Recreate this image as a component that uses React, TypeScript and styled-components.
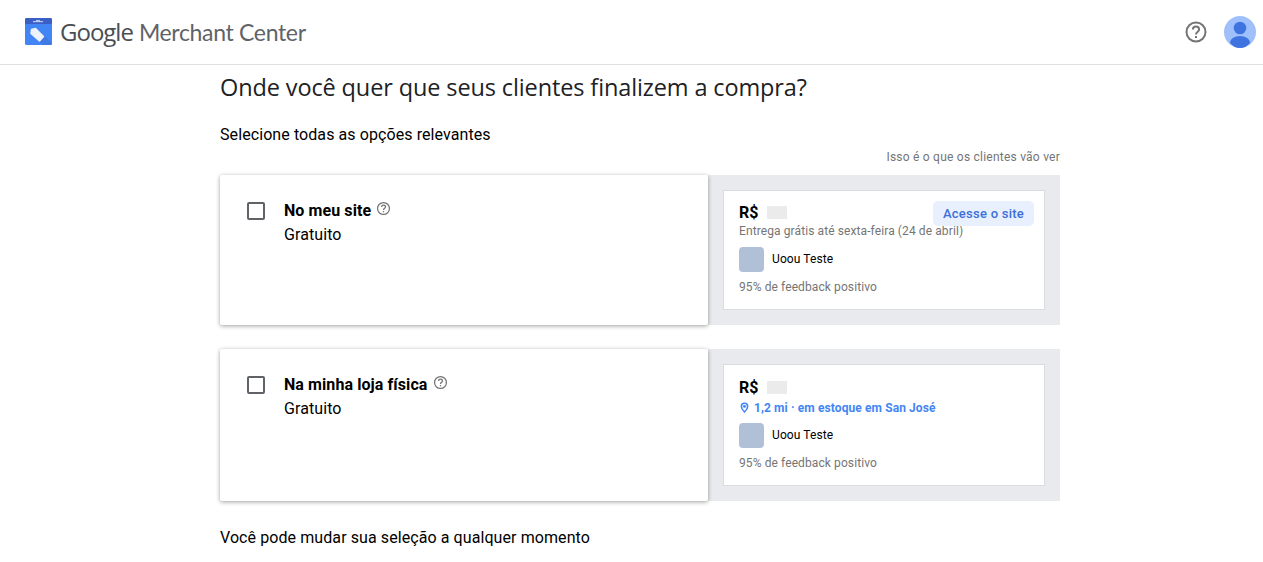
import React from "react";
import styled, { createGlobalStyle } from "styled-components";

const Global = createGlobalStyle`
  html, body { margin: 0; padding: 0; background: #fff; font-family: Roboto, "Liberation Sans", sans-serif; overflow: hidden; }
`;
const Header = styled.header`
  height: 64px; border-bottom: 1px solid #e0e0e0; display: flex; align-items: center;
  padding: 0 7px 0 24px;
`;
const Brand = styled.div`display: flex; align-items: center; flex: 1; gap: 8px;`;
const BrandText = styled.div`
  font-family: Lato, Roboto, sans-serif; font-size: 23px; color: #5f6368; letter-spacing: -0.33px; white-space: nowrap; display: flex; gap: 6px;
`;
const BrandGoogle = styled.span`font-family: "Open Sans", sans-serif; font-size: 24px; font-weight: 500; color: #4a4e52; letter-spacing: -1px; line-height: 28px;`;
const HelpBtn = styled.div`width: 24px; height: 24px; margin-right: 16px; display: flex;`;
const Avatar = styled.div`width: 32px; height: 32px; display: flex;`;
const Main = styled.main`width: 840px; margin-left: 220px;`;
const Title = styled.h1`
  margin: 6px 0 0; font-family: "Open Sans", Roboto, sans-serif; font-weight: 400; font-size: 23.5px; line-height: 32px; color: #202124; letter-spacing: -0.12px;
`;
const Subtitle = styled.div`margin-top: 22px; font-size: 16px; line-height: 20px; color: #000; letter-spacing: 0.085px;`;
const Hint = styled.div`margin-top: 4px; text-align: right; font-size: 12px; line-height: 16px; color: #757575; letter-spacing: 0.23px;`;
const Row = styled.section<{ $h: number; $mt: number }>`display: flex; height: ${p => p.$h}px; margin-top: ${p => p.$mt}px;`;
const Choice = styled.div`
  width: 488px; background: #fff; border-radius: 2px; display: flex; padding: 24px 0 0 27px; box-sizing: border-box;
  box-shadow: 0 1px 4px rgba(0,0,0,.38); position: relative; z-index: 1;
`;
const Check = styled.div`width: 14px; height: 14px; border: 2px solid #5f6368; border-radius: 2px; margin-right: 19px; margin-top: 3px;`;
const ChoiceText = styled.div`font-size: 16px; line-height: 24px; color: #000; letter-spacing: 0.085px;`;
const ChoiceTitle = styled.div`display: flex; font-weight: 700; gap: 5px; align-items: flex-start;`;
const Tip = styled.span`display: flex; margin-top: 2px;`;
const Panel = styled.div`flex: 1; background: #e8eaed; padding: 15px; display: flex;`;
const Offer = styled.div<{ $top: number }>`
  flex: 1; background: #fff; border: 1px solid #dadce0; padding: ${p => p.$top}px 10px 0 15px; position: relative; box-sizing: border-box;
`;
const PriceRow = styled.div`display: flex; align-items: center; height: 22px; gap: 9px;`;
const Price = styled.span`font-size: 16px; font-weight: 700; color: #000;`;
const Blank = styled.span`width: 20px; height: 13px; background: #ebebeb;`;
const Visit = styled.div`
  position: absolute; top: 10px; right: 10px; width: 101px; height: 25px; background: #e8f0fe; border-radius: 5px;
  color: #3c6fd8; font-size: 13px; font-weight: 500; letter-spacing: 0.25px; display: flex; align-items: center; justify-content: center;
`;
const Delivery = styled.div`font-size: 12px; line-height: 16px; color: #757575; letter-spacing: 0.1px;`;
const Stock = styled.div`font-size: 12px; line-height: 16px; color: #4285f4; font-weight: 700; letter-spacing: 0.1px; display: flex; align-items: center; gap: 5px; margin-top: 2px;`;
const Seller = styled.div<{ $mt: number }>`display: flex; align-items: center; gap: 8px; margin-top: ${p => p.$mt}px; font-size: 12px; color: #000; letter-spacing: 0.1px;`;
const SellerName = styled.span`margin-top: -2px;`;
const Square = styled.div`width: 25px; height: 25px; border-radius: 4px; background: #b0c0d6;`;
const Feedback = styled.div`font-size: 12px; line-height: 16px; color: #757575; margin-top: 7px; letter-spacing: 0.1px;`;
const Footer = styled.div`margin-top: 27px; font-size: 16px; line-height: 20px; color: #000; letter-spacing: 0.085px;`;
const PinWrap = styled.span`display: flex; margin-left: 1px; margin-top: -2px;`;

const Help = ({ size, color, w }: { size: number; color: string; w: number }) => (
  <svg width={size} height={size} viewBox="0 0 24 24" fill="none">
    <circle cx="12" cy="12" r={10 - w / 2 + 0.5} stroke={color} strokeWidth={w} />
    <path d="M8.900 9.600c0-1.800 1.400-3.100 3.100-3.100s3.100 1.300 3.100 2.900c0 2.200-3.100 2.400-3.100 5" stroke={color} strokeWidth={w} fill="none" />
    <rect x="11" y="16" width="2" height="2" fill={color} />
  </svg>
);

const Logo = () => (
  <svg width="28" height="28" viewBox="0 0 28 28">
    <rect x="1" y="0" width="27" height="27" rx="1.500" fill="#4285f4" />
    <path d="M1 1.500A1.500 1.500 0 0 1 2.500 0h24A1.500 1.500 0 0 1 28 1.500V6H1z" fill="#3b5fc4" />
    <rect x="9" y="3" width="10" height="1.200" fill="#b4c8f4" />
    <rect x="12" y="2" width="4" height="1" fill="#b4c8f4" />
    <path d="M12 10l16 15v.5a1.500 1.500 0 0 1-1.500 1.500H19L7 16z" fill="#3a6fd0" opacity=".5" />
    <path d="M7.500 11.500L11.500 10.500L19.500 18.500L15.500 23L7 15.500z" fill="#eef2fb" stroke="#eef2fb" strokeWidth="1.500" strokeLinejoin="round" />
  </svg>
);

const Person = () => (
  <svg width="32" height="32" viewBox="0 0 32 32">
    <circle cx="16" cy="16" r="16" fill="#a0c0fb" />
    <circle cx="16" cy="12" r="6.300" fill="#3f74e0" />
    <path d="M6 27c0-4 4.500-7 10-7s10 3 10 7c-2.500 3-6 5-10 5s-7.500-2-10-5z" fill="#3f74e0" />
  </svg>
);

const Pin = () => (
  <svg width="9" height="11" viewBox="0 0 20 24" fill="none" stroke="#4285f4" strokeWidth="3.500">
    <path d="M10 22s-7-7-7-12.500a7 7 0 0 1 14 0C17 15 10 22 10 22z" />
    <circle cx="10" cy="9.500" r="1.500" fill="#4285f4" />
  </svg>
);

export default function App() {
  return (
    <>
      <Global />
      <Header>
        <Brand>
          <Logo />
          <BrandText><BrandGoogle>Google</BrandGoogle><span>Merchant Center</span></BrandText>
        </Brand>
        <HelpBtn><Help size={24} color="#757575" w={2} /></HelpBtn>
        <Avatar><Person /></Avatar>
      </Header>
      <Main>
        <Title>Onde você quer que seus clientes finalizem a compra?</Title>
        <Subtitle>Selecione todas as opções relevantes</Subtitle>
        <Hint>Isso é o que os clientes vão ver</Hint>
        <Row $h={150} $mt={10}>
          <Choice>
            <Check />
            <ChoiceText>
              <ChoiceTitle>No meu site <Tip><Help size={15} color="#757575" w={2} /></Tip></ChoiceTitle>
              Gratuito
            </ChoiceText>
          </Choice>
          <Panel>
            <Offer $top={10}>
              <PriceRow><Price>R$</Price><Blank /></PriceRow>
              <Visit>Acesse o site</Visit>
              <Delivery>Entrega grátis até sexta-feira (24 de abril)</Delivery>
              <Seller $mt={8}><Square /><SellerName>Uoou Teste</SellerName></Seller>
              <Feedback>95% de feedback positivo</Feedback>
            </Offer>
          </Panel>
        </Row>
        <Row $h={152} $mt={24}>
          <Choice>
            <Check />
            <ChoiceText>
              <ChoiceTitle>Na minha loja física <Tip><Help size={15} color="#757575" w={2} /></Tip></ChoiceTitle>
              Gratuito
            </ChoiceText>
          </Choice>
          <Panel>
            <Offer $top={11}>
              <PriceRow><Price>R$</Price><Blank /></PriceRow>
              <Stock><PinWrap><Pin /></PinWrap>1,2 mi · em estoque em San José</Stock>
              <Seller $mt={7}><Square /><SellerName>Uoou Teste</SellerName></Seller>
              <Feedback>95% de feedback positivo</Feedback>
            </Offer>
          </Panel>
        </Row>
        <Footer>Você pode mudar sua seleção a qualquer momento</Footer>
      </Main>
    </>
  );
}
